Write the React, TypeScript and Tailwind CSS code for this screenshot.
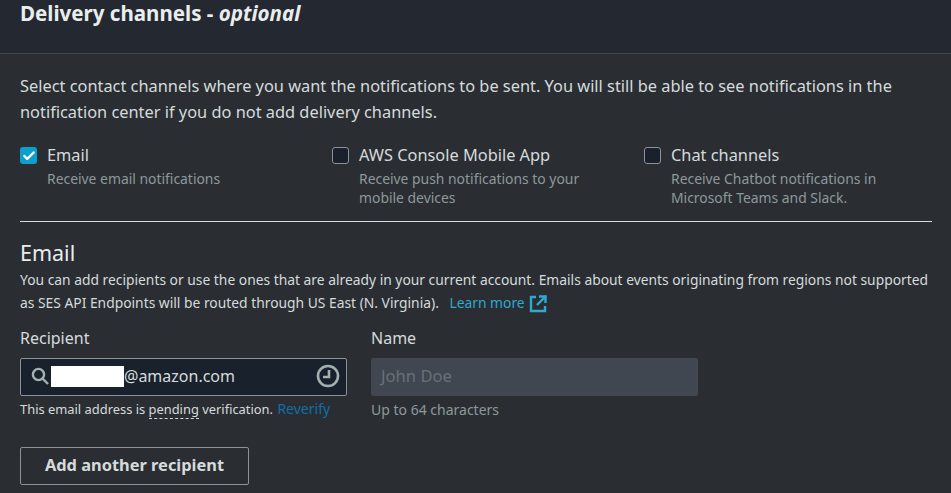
import { Check } from "lucide-react";

const font = { fontFamily: '"Noto Sans", sans-serif' };

function Channel({ label, desc, checked }: { label: string; desc: React.ReactNode; checked?: boolean }) {
  return (
    <div className="flex w-[312px] shrink-0 gap-[10px]">
      <div className={checked
        ? "mt-[1px] flex h-[17px] w-[17px] shrink-0 items-center justify-center rounded-[3px] bg-[#0a9fcf]"
        : "mt-[1px] h-[17px] w-[17px] shrink-0 rounded-[3px] border border-[#8a9399] bg-[#1a212c]"}>
        {checked && <Check size={14} strokeWidth={4} color="#ffffff" />}
      </div>
      <div>
        <div className="text-[16.35px] leading-[19px] text-[#d5dbdb]">{label}</div>
        <div className="mt-[4px] text-[13.9px] leading-[19px] text-[#8d9999]">{desc}</div>
      </div>
    </div>
  );
}

export default function App() {
  return (
    <div style={font} className="h-[493px] w-[951px] overflow-hidden bg-[#2a2e33]">
      <div className="h-[54px] border-b border-[#414750] bg-[#232831] px-5 pt-[1px]">
        <h2 className="text-[20.55px] font-bold leading-[25px] text-[#eaeded]">
          Delivery channels - <em className="font-bold">optional</em>
        </h2>
      </div>
      <div className="pl-5 pr-[19px]">
        <p className="mt-[19px] whitespace-nowrap text-[16.38px] leading-[26px] text-[#d5dbdb]">
          Select contact channels where you want the notifications to be sent. You will still be able to see notifications in the
          <br />
          notification center if you do not add delivery channels.
        </p>
        <div className="mt-[21px] flex h-[75px] box-content border-b border-[#d5dbdb]">
          <Channel checked label="Email" desc="Receive email notifications" />
          <Channel label="AWS Console Mobile App" desc={<>Receive push notifications to your<br />mobile devices</>} />
          <Channel label="Chat channels" desc={<>Receive Chatbot notifications in<br />Microsoft Teams and Slack.</>} />
        </div>
        <h3 className="mt-[17px] text-[21.5px] leading-[28px] text-[#eaeded]">Email</h3>
        <p className="mt-[1px] whitespace-nowrap text-[13.84px] leading-[23px] text-[#d5dbdb]">
          You can add recipients or use the ones that are already in your current account. Emails about events originating from regions not supported
          <br />
          as SES API Endpoints will be routed through US East (N. Virginia).{" "}
          <span className="ml-[7px] text-[#2ea9cf]">Learn more</span>
          <svg className="ml-[4px] inline-block align-[-5px]" width="18" height="18" viewBox="0 0 18 18" fill="none" stroke="#2ea9cf" strokeWidth="2.4">
            <path d="M7 2H2v14h14v-5" />
            <path d="M17 1 8 10" />
            <path d="M10 1.5h6.5V8" />
          </svg>
        </p>
        <div className="mt-[13px] flex gap-6">
          <div className="w-[327px]">
            <div className="text-[16px] leading-[22px] text-[#d5dbdb]">Recipient</div>
            <div className="mt-[9px] flex h-[38px] items-center rounded-[2px] border border-[#8a9399] bg-[#19212c] pb-[2px] pl-[10px] pr-[6px]">
              <svg width="18" height="18" viewBox="0 0 18 18" fill="none" stroke="#a3b0b0" strokeWidth="2.4">
                <circle cx="7.5" cy="7.5" r="5.6" />
                <path d="m11.5 11.5 5.5 5.5" />
              </svg>
              <div className="ml-[2px] h-[21px] w-[73px] bg-white" />
              <span className="text-[16px] text-[#d5dbdb]">@amazon.com</span>
              <svg className="ml-auto" width="24" height="24" viewBox="0 0 24 24" fill="none" stroke="#a3b0b0" strokeWidth="2.6">
                <circle cx="12" cy="12" r="10" />
                <path d="M13 6v7H7" />
              </svg>
            </div>
            <div className="mt-[3px] whitespace-nowrap text-[12.9px] leading-[19px] text-[#d5dbdb]">
              This email address is <span className="border-b border-dashed border-[#d5dbdb]">pending</span> verification.{" "}
              <span className="ml-[1px] text-[14px] text-[#0f6fa8]">Reverify</span>
            </div>
          </div>
          <div className="w-[327px]">
            <div className="text-[16px] leading-[22px] text-[#d5dbdb]">Name</div>
            <div className="mt-[9px] flex h-[38px] items-center rounded-[2px] bg-[#414750] pb-[2px] pl-[10px] text-[16.6px] text-[#687078]">John Doe</div>
            <div className="mt-[3px] text-[14px] leading-[21px] text-[#8d9999]">Up to 64 characters</div>
          </div>
        </div>
        <button className="mt-[27px] h-[38px] w-[229px] rounded-[2px] border border-[#8a9399] pb-[2px] text-[16.4px] font-bold text-[#d5dbdb]">
          Add another recipient
        </button>
      </div>
    </div>
  );
}
